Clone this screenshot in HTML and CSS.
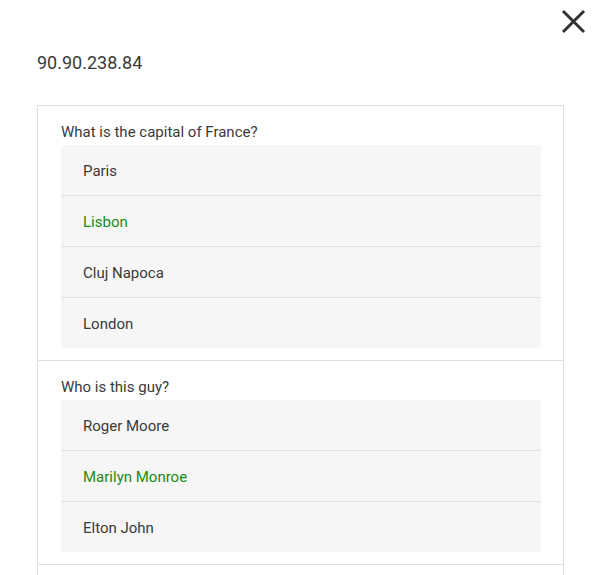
FILE: index.html
```html
<!DOCTYPE html>
<html>
<head>
<meta charset="utf-8">
<link rel="stylesheet" href="styles.css">
</head>
<body>
<div class="page">
  <button class="close" aria-label="Close">
    <svg width="25" height="25" viewBox="0 0 25 25"><path d="M2 2L23 23M23 2L2 23" stroke="#333" stroke-width="3" fill="none"/></svg>
  </button>
  <div class="ip">90.90.238.84</div>
  <div class="card">
    <div class="section">
      <div class="question">What is the capital of France?</div>
      <div class="options">
        <div class="option">Paris</div>
        <div class="option correct">Lisbon</div>
        <div class="option">Cluj Napoca</div>
        <div class="option">London</div>
      </div>
    </div>
    <div class="section">
      <div class="question">Who is this guy?</div>
      <div class="options">
        <div class="option">Roger Moore</div>
        <div class="option correct">Marilyn Monroe</div>
        <div class="option">Elton John</div>
      </div>
    </div>
    <div class="section">
      <div class="question">&nbsp;</div>
    </div>
  </div>
</div>
</body>
</html>
```
FILE: styles.css
```css
html, body {
  margin: 0;
  padding: 0;
  background: #fff;
  font-family: Roboto, "Liberation Sans", sans-serif;
  color: #3a3a3a;
  overflow: hidden;
}
.page {
  position: relative;
  padding: 52px 36px 0 37px;
}
.close {
  position: absolute;
  top: 9px;
  right: 14px;
  width: 25px;
  height: 25px;
  padding: 0;
  border: 0;
  background: none;
}
.close svg { display: block; }
.ip {
  font-size: 18px;
  line-height: 22px;
  color: #3a3a3a;
  margin-bottom: 31px;
}
.card {
  border: 1px solid #e0e0e0;
}
.section {
  padding: 16px 22px 12px 23px;
  border-bottom: 1px solid #e0e0e0;
}
.question {
  font-size: 15px;
  line-height: 20px;
  margin-bottom: 3px;
  color: #3a3a3a;
}
.options {
  background: #f6f6f6;
  border-radius: 3px;
}
.option {
  height: 48px;
  padding-top: 2px;
  display: flex;
  align-items: center;
  padding-left: 22px;
  font-size: 15px;
  color: #3a3a3a;
  border-top: 1px solid #e2e2e2;
}
.option:first-child { border-top: 0; }
.option.correct { color: #1a8a1a; }
```
